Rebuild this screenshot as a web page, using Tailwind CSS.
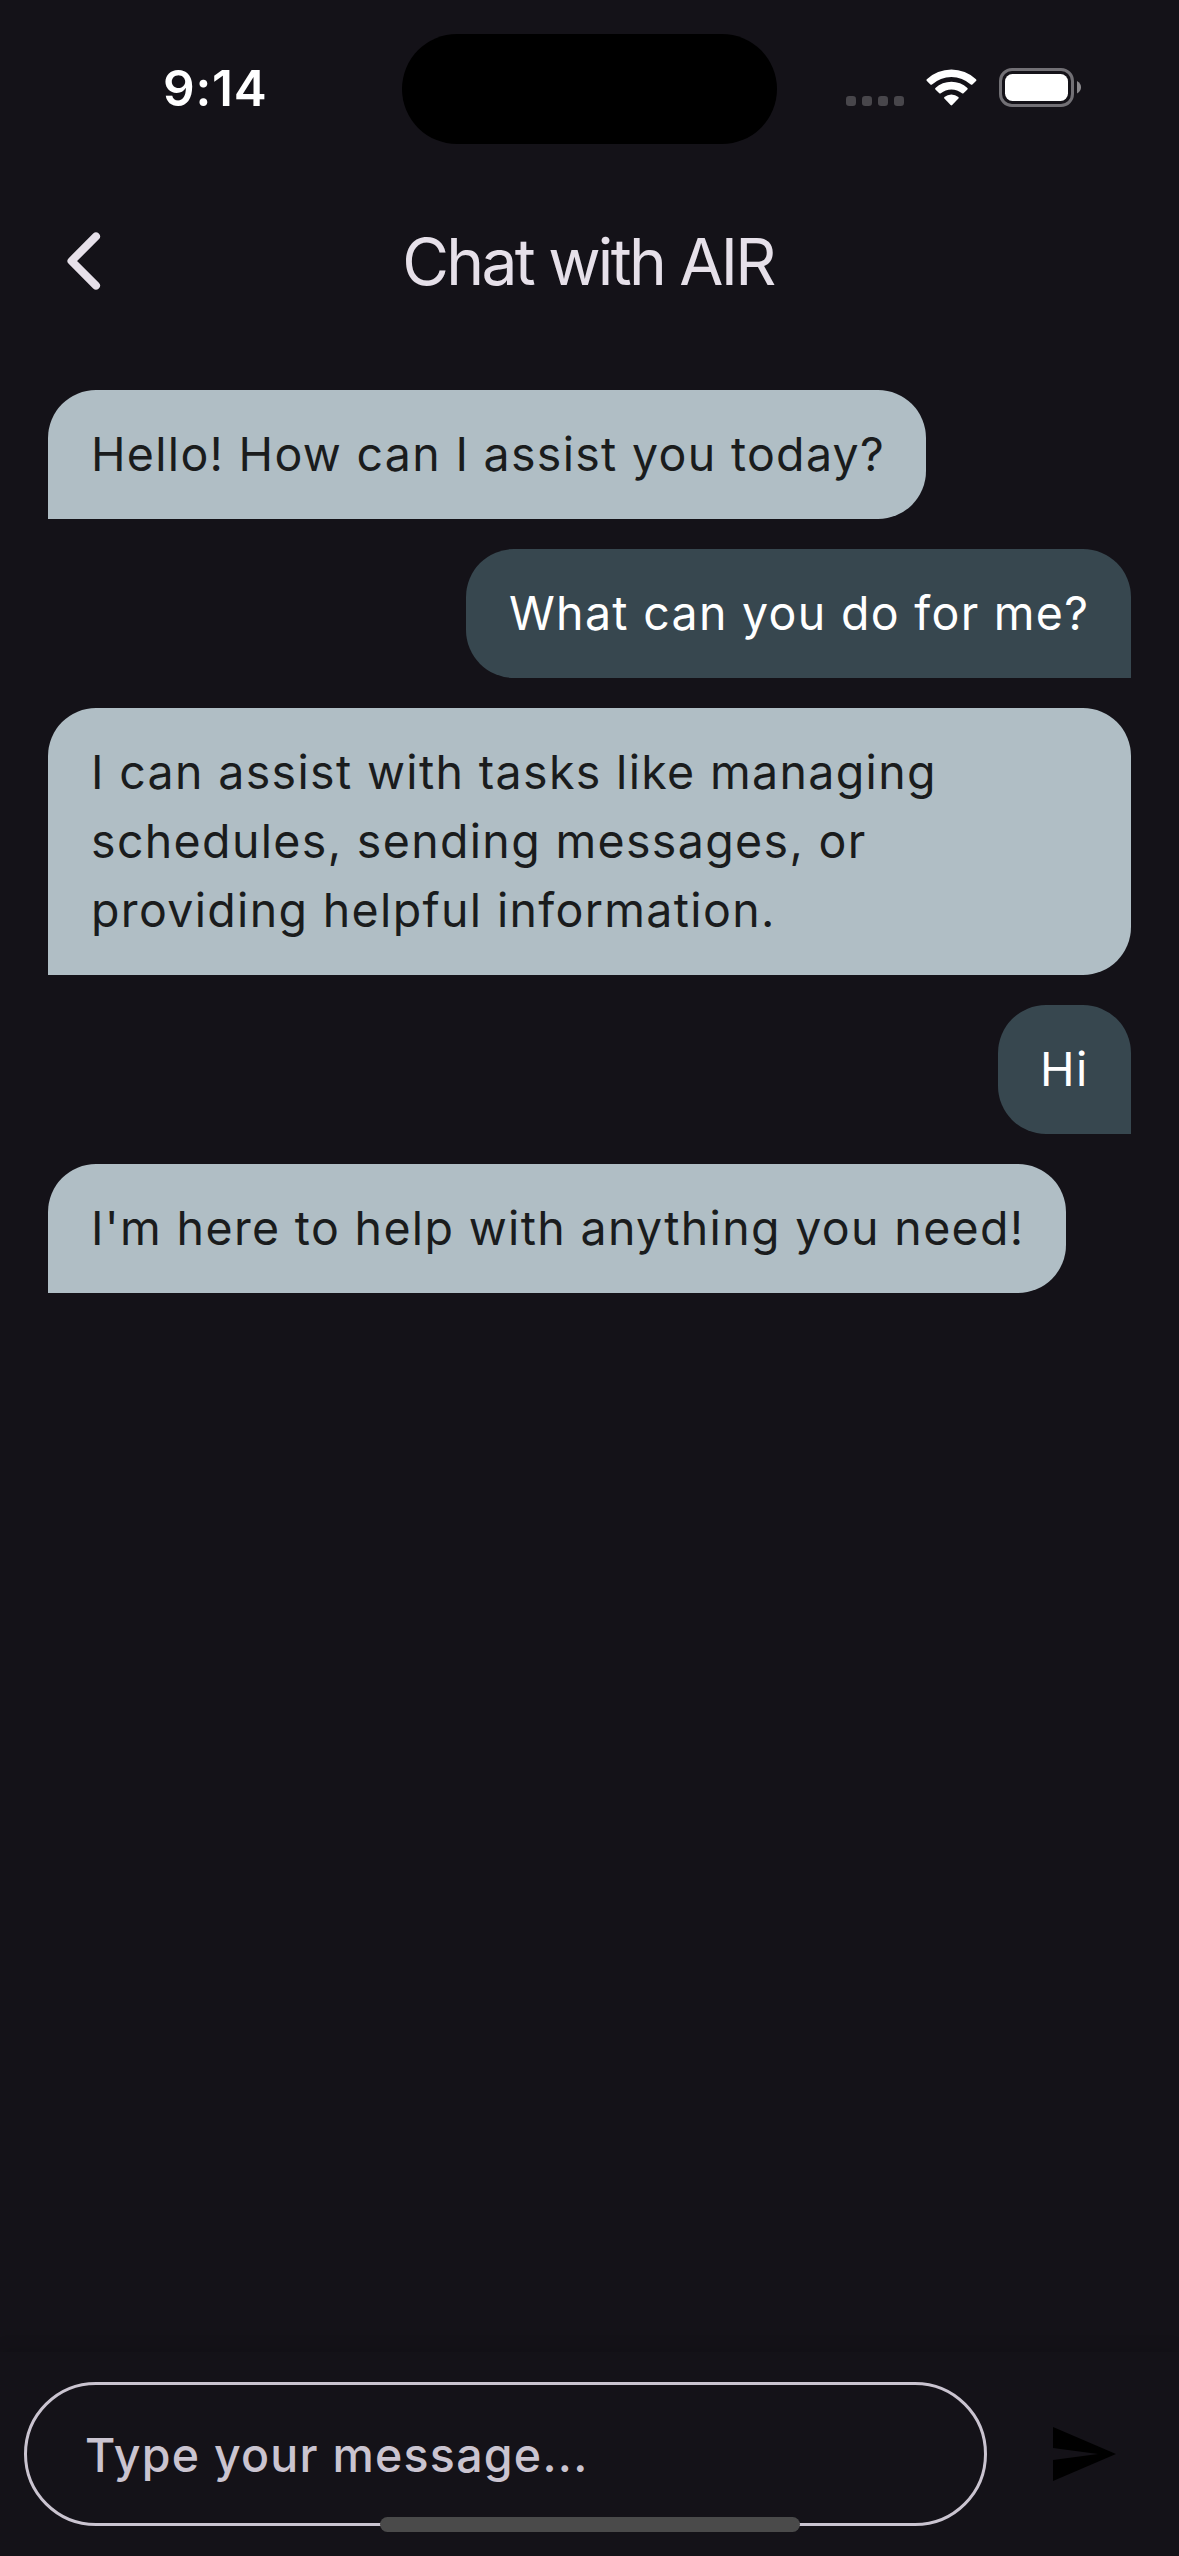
<!DOCTYPE html>
<html lang="en">
<head>
<meta charset="utf-8">
<title>Chat with AIR</title>
<script src="https://cdn.jsdelivr.net/npm/@tailwindcss/browser@4"></script>
</head>
<body class="bg-[#141218] font-['Inter',sans-serif]">
<div class="relative flex h-[2556px] w-[1179px] flex-col overflow-hidden bg-[#141218]">
  <!-- Status bar -->
  <div class="flex h-[177px] shrink-0 items-start">
    <div class="w-[402px] pt-[58px] pl-[163px] text-[49.5px] leading-[60px] font-semibold tracking-[0.8px] text-white">9:14</div>
    <div class="mt-[34px] h-[110px] w-[375px] rounded-full bg-black"></div>
    <svg class="mt-[60px] ml-[63px] h-[60px] w-[250px]" viewBox="840 60 250 60">
      <g fill="#48464b">
        <rect x="846" y="96" width="10" height="10" rx="3.2"/>
        <rect x="862" y="96" width="10" height="10" rx="3.2"/>
        <rect x="878" y="96" width="10" height="10" rx="3.2"/>
        <rect x="894" y="96" width="10" height="10" rx="3.2"/>
      </g>
      <g fill="#fff">
        <path d="M926.8 79.2 Q926 80.2 926.9 81 L930.4 84.5 Q931.2 85.2 932 84.5 A29 29 0 0 1 970.8 84.5 Q971.6 85.2 972.4 84.5 L976 81 Q976.8 80.2 976 79.2 A36 36 0 0 0 926.8 79.2Z"/>
        <path d="M935.4 88 Q934.7 88.8 935.4 89.5 L939.3 93.3 Q940 93.9 940.8 93.3 A16.4 16.4 0 0 1 962 93.3 Q962.8 93.9 963.5 93.3 L967.4 89.5 Q968.1 88.8 967.4 88 A23.6 23.6 0 0 0 935.4 88Z"/>
        <path d="M944.4 97 Q943.7 97.8 944.4 98.6 L950.6 105.1 Q951.4 105.9 952.2 105.1 L958.4 98.6 Q959.1 97.8 958.4 97 A11 11 0 0 0 944.4 97Z"/>
      </g>
      <rect x="1000.5" y="69.5" width="72" height="36" rx="11.5" fill="none" stroke="#727075" stroke-width="3"/>
      <rect x="1005" y="74" width="63" height="27" rx="7.5" fill="#fff"/>
      <path d="M1077 81 Q1081 83.2 1081 87.2 Q1081 91.2 1077 93.400Z" fill="#8a888c"/>
    </svg>
  </div>

  <!-- App bar -->
  <div class="grid h-[168px] shrink-0 grid-cols-[168px_1fr_168px] items-center">
    <svg class="ml-[48px] h-[72px] w-[72px]" viewBox="48 225 72 72" fill="none" stroke="#e6e0e9" stroke-width="8" stroke-linecap="round" stroke-linejoin="round">
      <path d="M96 236.400 L71.500 261 L96 285.600"/>
    </svg>
    <h1 class="pt-[2px] pr-[3px] text-center text-[64px] leading-[84px] tracking-[-2.7px] text-[#e6e0e9]">Chat with AIR</h1>
  </div>

  <!-- Conversation -->
  <div class="flex grow flex-col gap-[30px] px-[48px] pt-[45px] text-[46.5px] leading-[69px] tracking-[1.34px]">
    <div class="w-[878px] self-start rounded-[48px] rounded-bl-none bg-[#b0bec5] py-[30px] pl-[43px] tracking-[1.3px] whitespace-nowrap text-[#1a1c1d]">Hello! How can I assist you today?</div>
    <div class="w-[665px] self-end rounded-[48px] rounded-br-none bg-[#37474f] py-[30px] pl-[43px] tracking-[1.3px] whitespace-nowrap text-white">What can you do for me?</div>
    <div class="self-stretch rounded-[48px] rounded-bl-none bg-[#b0bec5] py-[30px] pl-[43px] text-[#1a1c1d]">I can assist with tasks like managing<br>schedules, sending messages, or<br>providing helpful information.</div>
    <div class="w-[133px] self-end rounded-[48px] rounded-br-none bg-[#37474f] py-[30px] pl-[42px] text-white">Hi</div>
    <div class="w-[1018px] self-start rounded-[48px] rounded-bl-none bg-[#b0bec5] py-[30px] pl-[43px] whitespace-nowrap text-[#1a1c1d]">I'm here to help with anything you need!</div>
  </div>

  <!-- Composer -->
  <div class="flex h-[204px] shrink-0 items-start bg-[#141218] pt-[30px] pl-[24px] shadow-[0_-3px_15px_rgba(0,0,0,0.12)]">
    <div class="flex h-[144px] w-[963px] items-center rounded-full border-[3px] border-[#cac4d0] pt-[2px] pl-[58px] text-[46.5px] leading-[69px] font-medium tracking-[1.25px] text-[#cac4d0]">Type your message...</div>
    <svg class="mt-[36px] ml-[60px] h-[72px] w-[72px]" viewBox="0 0 24 24" fill="#000"><path d="M2.010 21 23 12 2.010 3 2 10l15 2-15 2z"/></svg>
  </div>

  <!-- Home indicator -->
  <div class="absolute bottom-[24px] left-[380px] h-[15px] w-[420px] rounded-full bg-[#4a4a4a]"></div>
</div>
</body>
</html>
